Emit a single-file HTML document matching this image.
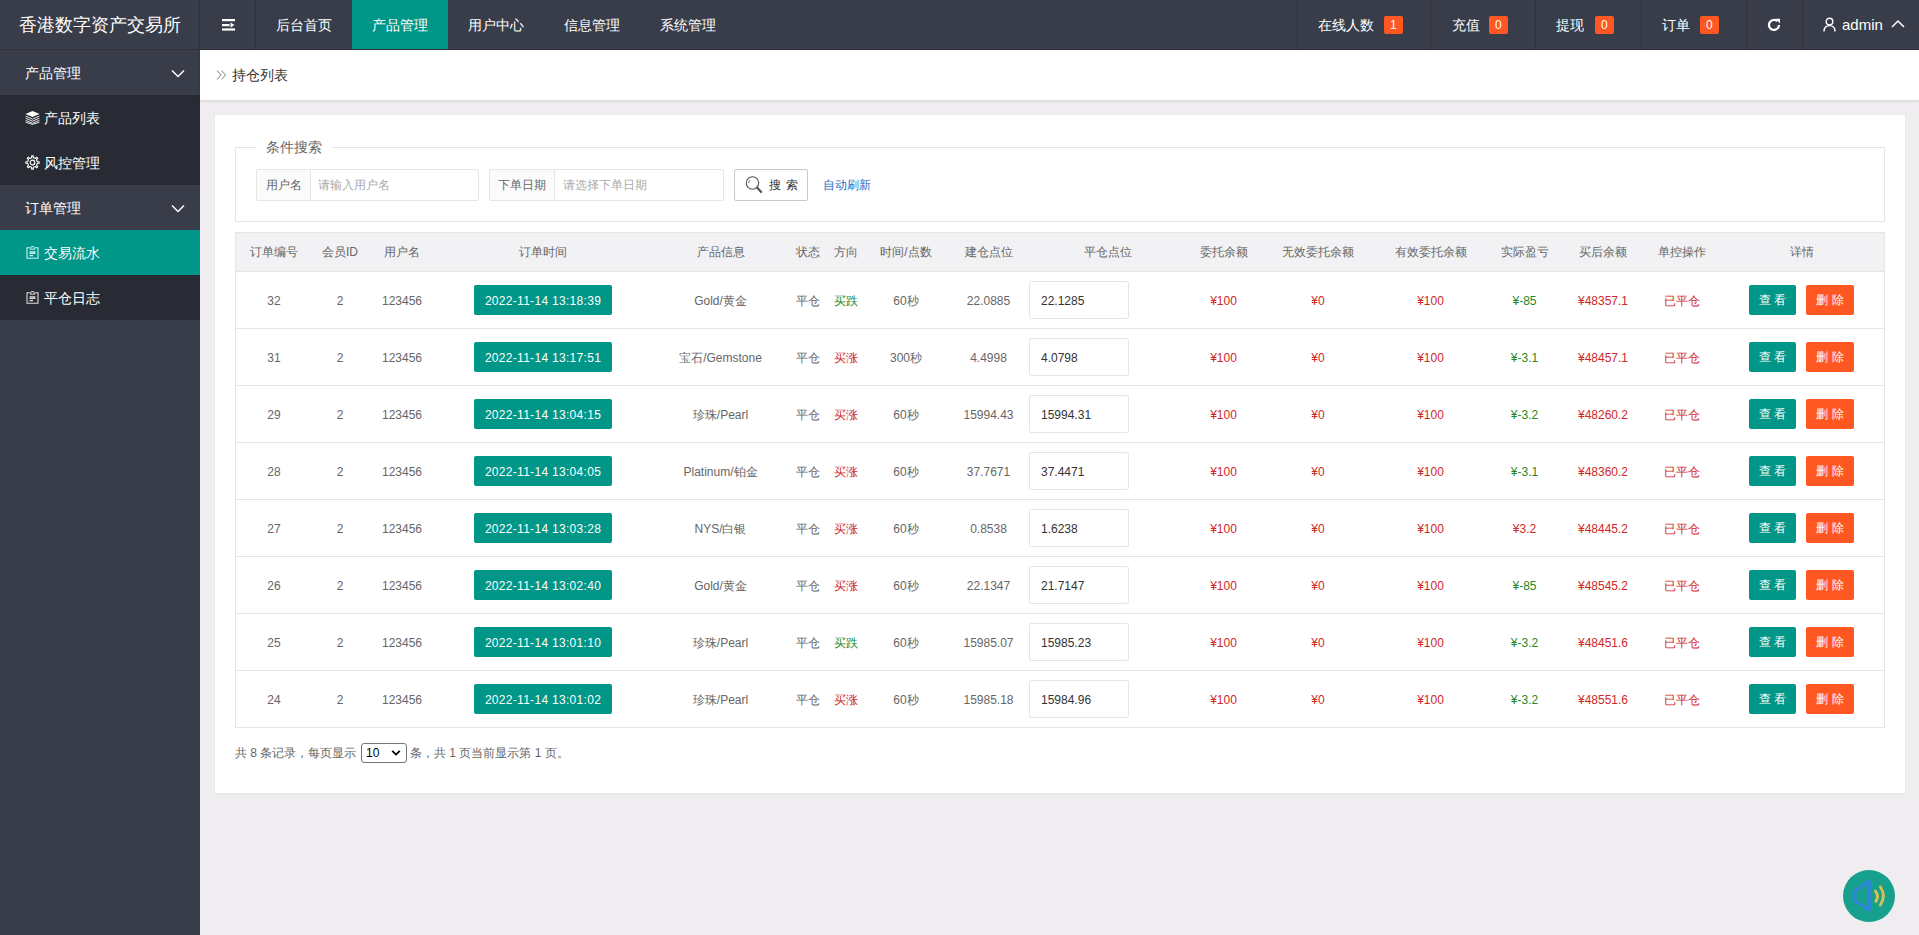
<!DOCTYPE html><html><head><meta charset="utf-8"><title>持仓列表</title><style>

*{box-sizing:border-box;margin:0;padding:0}
html,body{width:1919px;height:935px;overflow:hidden}
body{background:#EFEDF0;font-family:"Liberation Sans", sans-serif;color:#666;font-size:12px;position:relative}
.abs{position:absolute}
.t{position:absolute;white-space:nowrap;line-height:1}
.c{position:absolute;white-space:nowrap;text-align:center;line-height:20px;height:20px}
#hdr{left:0;top:0;width:1919px;height:50px;background:#393D49}
#hdr .ln{position:absolute;top:0;width:1px;height:49px;background:#2f323c}
#hdr .bl{position:absolute;left:0;top:49px;width:1919px;height:1px;background:#30333c}
.nav{position:absolute;top:0;height:50px;line-height:50px;color:#fff;font-size:14px;text-align:center}
.badge{display:inline-block;position:absolute;top:16px;height:18px;line-height:18px;padding:0 6px;background:#FF5722;color:#fff;font-size:12px;border-radius:2px}
#side{left:0;top:50px;width:200px;height:885px;background:#393D49}
.mi{position:absolute;left:0;width:200px;height:45px;line-height:45px;color:#fff;font-size:14px}
#crumb{left:200px;top:50px;width:1719px;height:50px;background:#fff;box-shadow:0 1px 3px rgba(0,0,0,.12)}
#card{left:215px;top:115px;width:1690px;height:678px;background:#fff;box-shadow:0 1px 2px rgba(0,0,0,.05)}
.ig{position:absolute;height:32px;border:1px solid #e6e6e6;border-radius:2px;background:#fff}
.ig .lb{position:absolute;left:0;top:0;height:30px;line-height:30px;background:#FBFBFB;border-right:1px solid #e6e6e6;color:#666;text-align:center;font-size:12px}
.ig .ph{position:absolute;top:0;height:30px;line-height:30px;color:#aaa;font-size:12px}
.btn{position:absolute;height:30px;line-height:30px;color:#fff;font-size:12px;text-align:center;border-radius:2px}
.inp{position:absolute;width:100px;height:38px;border:1px solid #e6e6e6;border-radius:2px;background:#fff;color:#333;font-size:12px;line-height:38px;padding-left:11px}

</style></head><body>
<div id="hdr" class="abs">
<div class="t" style="left:19px;top:16px;font-size:18px;color:#fff">香港数字资产交易所</div>
<div class="ln" style="left:199px"></div>
<div class="ln" style="left:255px"></div>
<div class="ln" style="left:1297px"></div>
<div class="ln" style="left:1430px"></div>
<div class="ln" style="left:1535px"></div>
<div class="ln" style="left:1641px"></div>
<div class="ln" style="left:1746px"></div>
<div class="ln" style="left:1802px"></div>
<div class="bl"></div>
<svg class="abs" style="left:221px;top:18px" width="15" height="14" viewBox="0 0 15 14"><rect x="1" y="1" width="13" height="2.2" fill="#fff"/><rect x="1" y="6" width="7.5" height="2.2" fill="#fff"/><path d="M9.5 4.6 L13.5 7.1 L9.5 9.6 Z" fill="#fff"/><rect x="1" y="10.4" width="13" height="2.2" fill="#fff"/></svg>
<div class="abs" style="left:352px;top:0;width:96px;height:49px;background:#009688"></div>
<div class="nav" style="left:256px;width:96px">后台首页</div>
<div class="nav" style="left:352px;width:96px">产品管理</div>
<div class="nav" style="left:448px;width:96px">用户中心</div>
<div class="nav" style="left:544px;width:96px">信息管理</div>
<div class="nav" style="left:640px;width:96px">系统管理</div>
<div class="t" style="left:1318px;top:18px;font-size:14px;color:#fff">在线人数</div>
<div class="badge" style="left:1384px">1</div>
<div class="t" style="left:1452px;top:18px;font-size:14px;color:#fff">充值</div>
<div class="badge" style="left:1489px">0</div>
<div class="t" style="left:1556px;top:18px;font-size:14px;color:#fff">提现</div>
<div class="badge" style="left:1595px">0</div>
<div class="t" style="left:1662px;top:18px;font-size:14px;color:#fff">订单</div>
<div class="badge" style="left:1700px">0</div>
<svg class="abs" style="left:1766px;top:17px" width="16" height="16" viewBox="0 0 16 16"><path d="M13 8 A5 5 0 1 1 11.3 4.2" fill="none" stroke="#fff" stroke-width="2.2"/><path d="M9.2 1.8 L14 1.8 L14 6.6 Z" fill="#fff"/></svg>
<svg class="abs" style="left:1823px;top:17px" width="13" height="15" viewBox="0 0 13 15"><circle cx="6.5" cy="4.5" r="3.3" fill="none" stroke="#fff" stroke-width="1.4"/><path d="M1 14.5 C1 10.5 3.5 8.6 6.5 8.6 C9.5 8.6 12 10.5 12 14.5" fill="none" stroke="#fff" stroke-width="1.4"/></svg>
<div class="t" style="left:1842px;top:17px;font-size:15px;color:#fff">admin</div>
<svg class="abs" style="left:1891px;top:19px" width="14" height="9" viewBox="0 0 14 9"><path d="M1 8 L7 2 L13 8" fill="none" stroke="#fff" stroke-width="1.5"/></svg>
</div>
<div id="side" class="abs">
<div class="abs" style="left:0;top:45px;width:200px;height:90px;background:#282B33"></div>
<div class="abs" style="left:0;top:180px;width:200px;height:45px;background:#009688"></div>
<div class="abs" style="left:0;top:225px;width:200px;height:45px;background:#282B33"></div>
<div class="mi" style="top:0"><span class="t" style="left:25px;top:16px">产品管理</span></div>
<svg class="abs" style="left:171px;top:19px" width="14" height="9" viewBox="0 0 14 9"><path d="M1 1.5 L7 7.5 L13 1.5" fill="none" stroke="#fff" stroke-width="1.5"/></svg>
<div class="mi" style="top:45px"><span class="t" style="left:44px;top:16px">产品列表</span></div>
<div class="mi" style="top:90px"><span class="t" style="left:44px;top:16px">风控管理</span></div>
<div class="mi" style="top:135px"><span class="t" style="left:25px;top:16px">订单管理</span></div>
<svg class="abs" style="left:171px;top:154px" width="14" height="9" viewBox="0 0 14 9"><path d="M1 1.5 L7 7.5 L13 1.5" fill="none" stroke="#fff" stroke-width="1.5"/></svg>
<div class="mi" style="top:180px"><span class="t" style="left:44px;top:16px">交易流水</span></div>
<div class="mi" style="top:225px"><span class="t" style="left:44px;top:16px">平仓日志</span></div>
<svg class="abs" style="left:25px;top:61px" width="15" height="14" viewBox="0 0 15 14"><path d="M7.5 0 L14.5 3 L7.5 6 L0.5 3 Z" fill="#fff"/><path d="M0.6 5.1 L7.5 8.1 L14.4 5.1 M0.6 7.2 L7.5 10.2 L14.4 7.2 M0.6 9.3 L7.5 12.3 L14.4 9.3 M0.6 11.2 L7.5 13.4 L14.4 11.2" fill="none" stroke="#fff" stroke-width="0.9"/></svg>
<svg class="abs" style="left:25px;top:105px" width="15" height="15" viewBox="0 0 15 15"><circle cx="7.5" cy="7.5" r="2.3" fill="none" stroke="#fff" stroke-width="1.2"/><path d="M6.64 2.68 L6.71 0.85 L8.29 0.85 L8.36 2.68 L10.30 3.48 L11.65 2.24 L12.76 3.35 L11.52 4.70 L12.32 6.64 L14.15 6.71 L14.15 8.29 L12.32 8.36 L11.52 10.30 L12.76 11.65 L11.65 12.76 L10.30 11.52 L8.36 12.32 L8.29 14.15 L6.71 14.15 L6.64 12.32 L4.70 11.52 L3.35 12.76 L2.24 11.65 L3.48 10.30 L2.68 8.36 L0.85 8.29 L0.85 6.71 L2.68 6.64 L3.48 4.70 L2.24 3.35 L3.35 2.24 L4.70 3.48 Z" fill="none" stroke="#fff" stroke-width="1.1" stroke-linejoin="round"/></svg>
<svg class="abs" style="left:26px;top:196px" width="13" height="13" viewBox="0 0 13 13"><path d="M4 1.8 H1 V12.2 H12 V1.8 H9" fill="none" stroke="#C8F3EA" stroke-width="1.1"/><path d="M4.3 3.2 L5.3 0.6 H7.7 L8.7 3.2 Z" fill="none" stroke="#C8F3EA" stroke-width="1"/><path d="M3.5 5.8 H9.5 M3.5 7.3 H9.5 M3.5 9.6 H7" stroke="#C8F3EA" stroke-width="1.2"/></svg>
<svg class="abs" style="left:26px;top:241px" width="13" height="13" viewBox="0 0 13 13"><path d="M4 1.8 H1 V12.2 H12 V1.8 H9" fill="none" stroke="#ddd" stroke-width="1.1"/><path d="M4.3 3.2 L5.3 0.6 H7.7 L8.7 3.2 Z" fill="none" stroke="#ddd" stroke-width="1"/><path d="M3.5 5.8 H9.5 M3.5 7.3 H9.5 M3.5 9.6 H7" stroke="#ddd" stroke-width="1.2"/></svg>
</div>
<div id="crumb" class="abs">
<svg class="abs" style="left:16px;top:19px" width="11" height="12" viewBox="0 0 11 12"><path d="M1 1.5 L5 6 L1 10.5 M5.5 1.5 L9.5 6 L5.5 10.5" fill="none" stroke="#999" stroke-width="1.1"/></svg>
<div class="t" style="left:32px;top:18px;font-size:14px;color:#333">持仓列表</div>
</div>
<div id="card" class="abs"></div>
<div class="abs" style="left:235px;top:147px;width:1650px;height:75px;border:1px solid #e6e6e6"></div>
<div class="abs" style="left:256px;top:138px;width:76px;height:20px;background:#fff"></div>
<div class="t" style="left:266px;top:140px;font-size:14px;color:#666">条件搜索</div>
<div class="ig" style="left:256px;top:169px;width:223px"><div class="lb" style="width:54px">用户名</div><div class="ph" style="left:61px">请输入用户名</div></div>
<div class="ig" style="left:489px;top:169px;width:235px"><div class="lb" style="width:65px">下单日期</div><div class="ph" style="left:73px">请选择下单日期</div></div>
<div class="abs" style="left:734px;top:169px;width:74px;height:32px;border:1px solid #C9C9C9;border-radius:2px;background:#fff"></div>
<svg class="abs" style="left:745px;top:175px" width="18" height="19" viewBox="0 0 18 19"><circle cx="7.5" cy="8" r="6.2" fill="none" stroke="#555" stroke-width="1.1"/><path d="M3.8 8.2 A3.8 3.8 0 0 1 5.2 5.2" fill="none" stroke="#555" stroke-width="0.9"/><path d="M12 12.6 L16.2 17" stroke="#555" stroke-width="2.2" stroke-linecap="round"/></svg>
<div class="t" style="left:769px;top:179px;font-size:12px;color:#333">搜<span style="margin-left:5px">索</span></div>
<div class="t" style="left:823px;top:179px;font-size:12px;color:#1f70c8">自动刷新</div>
<div class="abs" style="left:235px;top:232px;width:1650px;height:40px;background:#F2F2F4;border:1px solid #e6e6e6;border-bottom:1px solid #e6e6e6"></div>
<div class="abs" style="left:235px;top:232px;width:1650px;height:496px;border:1px solid #e6e6e6"></div>
<div class="c" style="left:214px;top:242px;width:120px;color:#666">订单编号</div>
<div class="c" style="left:280px;top:242px;width:120px;color:#666">会员ID</div>
<div class="c" style="left:342px;top:242px;width:120px;color:#666">用户名</div>
<div class="c" style="left:483px;top:242px;width:120px;color:#666">订单时间</div>
<div class="c" style="left:660.5px;top:242px;width:120px;color:#666">产品信息</div>
<div class="c" style="left:748px;top:242px;width:120px;color:#666">状态</div>
<div class="c" style="left:785.5px;top:242px;width:120px;color:#666">方向</div>
<div class="c" style="left:846px;top:242px;width:120px;color:#666">时间/点数</div>
<div class="c" style="left:928.5px;top:242px;width:120px;color:#666">建仓点位</div>
<div class="c" style="left:1048px;top:242px;width:120px;color:#666">平仓点位</div>
<div class="c" style="left:1163.5px;top:242px;width:120px;color:#666">委托余额</div>
<div class="c" style="left:1258px;top:242px;width:120px;color:#666">无效委托余额</div>
<div class="c" style="left:1370.5px;top:242px;width:120px;color:#666">有效委托余额</div>
<div class="c" style="left:1464.5px;top:242px;width:120px;color:#666">实际盈亏</div>
<div class="c" style="left:1543px;top:242px;width:120px;color:#666">买后余额</div>
<div class="c" style="left:1621.5px;top:242px;width:120px;color:#666">单控操作</div>
<div class="c" style="left:1741.5px;top:242px;width:120px;color:#666">详情</div>
<div class="c" style="left:204px;top:291px;width:140px;color:#666">32</div>
<div class="c" style="left:270px;top:291px;width:140px;color:#666">2</div>
<div class="c" style="left:332px;top:291px;width:140px;color:#666">123456</div>
<div class="btn" style="left:474px;top:285px;width:138px;line-height:32px;background:#009688;letter-spacing:0.3px">2022-11-14 13:18:39</div>
<div class="c" style="left:650.5px;top:291px;width:140px;color:#666">Gold/黄金</div>
<div class="c" style="left:738px;top:291px;width:140px;color:#666">平仓</div>
<div class="c" style="left:775.5px;top:291px;width:140px;color:#1F881F">买跌</div>
<div class="c" style="left:836px;top:291px;width:140px;color:#666">60秒</div>
<div class="c" style="left:918.5px;top:291px;width:140px;color:#666">22.0885</div>
<div class="inp" style="left:1029px;top:281px">22.1285</div>
<div class="c" style="left:1153.5px;top:291px;width:140px;color:#D02828">¥100</div>
<div class="c" style="left:1248px;top:291px;width:140px;color:#D02828">¥0</div>
<div class="c" style="left:1360.5px;top:291px;width:140px;color:#D02828">¥100</div>
<div class="c" style="left:1454.5px;top:291px;width:140px;color:#1F881F">¥-85</div>
<div class="c" style="left:1533px;top:291px;width:140px;color:#D02828">¥48357.1</div>
<div class="c" style="left:1611.5px;top:291px;width:140px;color:#D02828">已平仓</div>
<div class="btn" style="left:1749px;top:285px;width:47px;background:#009688">查&nbsp;看</div>
<div class="btn" style="left:1806px;top:285px;width:48px;background:#FF5722">删&nbsp;除</div>
<div class="abs" style="left:235px;top:328px;width:1650px;height:1px;background:#e6e6e6"></div>
<div class="c" style="left:204px;top:348px;width:140px;color:#666">31</div>
<div class="c" style="left:270px;top:348px;width:140px;color:#666">2</div>
<div class="c" style="left:332px;top:348px;width:140px;color:#666">123456</div>
<div class="btn" style="left:474px;top:342px;width:138px;line-height:32px;background:#009688;letter-spacing:0.3px">2022-11-14 13:17:51</div>
<div class="c" style="left:650.5px;top:348px;width:140px;color:#666">宝石/Gemstone</div>
<div class="c" style="left:738px;top:348px;width:140px;color:#666">平仓</div>
<div class="c" style="left:775.5px;top:348px;width:140px;color:#D02828">买涨</div>
<div class="c" style="left:836px;top:348px;width:140px;color:#666">300秒</div>
<div class="c" style="left:918.5px;top:348px;width:140px;color:#666">4.4998</div>
<div class="inp" style="left:1029px;top:338px">4.0798</div>
<div class="c" style="left:1153.5px;top:348px;width:140px;color:#D02828">¥100</div>
<div class="c" style="left:1248px;top:348px;width:140px;color:#D02828">¥0</div>
<div class="c" style="left:1360.5px;top:348px;width:140px;color:#D02828">¥100</div>
<div class="c" style="left:1454.5px;top:348px;width:140px;color:#1F881F">¥-3.1</div>
<div class="c" style="left:1533px;top:348px;width:140px;color:#D02828">¥48457.1</div>
<div class="c" style="left:1611.5px;top:348px;width:140px;color:#D02828">已平仓</div>
<div class="btn" style="left:1749px;top:342px;width:47px;background:#009688">查&nbsp;看</div>
<div class="btn" style="left:1806px;top:342px;width:48px;background:#FF5722">删&nbsp;除</div>
<div class="abs" style="left:235px;top:385px;width:1650px;height:1px;background:#e6e6e6"></div>
<div class="c" style="left:204px;top:405px;width:140px;color:#666">29</div>
<div class="c" style="left:270px;top:405px;width:140px;color:#666">2</div>
<div class="c" style="left:332px;top:405px;width:140px;color:#666">123456</div>
<div class="btn" style="left:474px;top:399px;width:138px;line-height:32px;background:#009688;letter-spacing:0.3px">2022-11-14 13:04:15</div>
<div class="c" style="left:650.5px;top:405px;width:140px;color:#666">珍珠/Pearl</div>
<div class="c" style="left:738px;top:405px;width:140px;color:#666">平仓</div>
<div class="c" style="left:775.5px;top:405px;width:140px;color:#D02828">买涨</div>
<div class="c" style="left:836px;top:405px;width:140px;color:#666">60秒</div>
<div class="c" style="left:918.5px;top:405px;width:140px;color:#666">15994.43</div>
<div class="inp" style="left:1029px;top:395px">15994.31</div>
<div class="c" style="left:1153.5px;top:405px;width:140px;color:#D02828">¥100</div>
<div class="c" style="left:1248px;top:405px;width:140px;color:#D02828">¥0</div>
<div class="c" style="left:1360.5px;top:405px;width:140px;color:#D02828">¥100</div>
<div class="c" style="left:1454.5px;top:405px;width:140px;color:#1F881F">¥-3.2</div>
<div class="c" style="left:1533px;top:405px;width:140px;color:#D02828">¥48260.2</div>
<div class="c" style="left:1611.5px;top:405px;width:140px;color:#D02828">已平仓</div>
<div class="btn" style="left:1749px;top:399px;width:47px;background:#009688">查&nbsp;看</div>
<div class="btn" style="left:1806px;top:399px;width:48px;background:#FF5722">删&nbsp;除</div>
<div class="abs" style="left:235px;top:442px;width:1650px;height:1px;background:#e6e6e6"></div>
<div class="c" style="left:204px;top:462px;width:140px;color:#666">28</div>
<div class="c" style="left:270px;top:462px;width:140px;color:#666">2</div>
<div class="c" style="left:332px;top:462px;width:140px;color:#666">123456</div>
<div class="btn" style="left:474px;top:456px;width:138px;line-height:32px;background:#009688;letter-spacing:0.3px">2022-11-14 13:04:05</div>
<div class="c" style="left:650.5px;top:462px;width:140px;color:#666">Platinum/铂金</div>
<div class="c" style="left:738px;top:462px;width:140px;color:#666">平仓</div>
<div class="c" style="left:775.5px;top:462px;width:140px;color:#D02828">买涨</div>
<div class="c" style="left:836px;top:462px;width:140px;color:#666">60秒</div>
<div class="c" style="left:918.5px;top:462px;width:140px;color:#666">37.7671</div>
<div class="inp" style="left:1029px;top:452px">37.4471</div>
<div class="c" style="left:1153.5px;top:462px;width:140px;color:#D02828">¥100</div>
<div class="c" style="left:1248px;top:462px;width:140px;color:#D02828">¥0</div>
<div class="c" style="left:1360.5px;top:462px;width:140px;color:#D02828">¥100</div>
<div class="c" style="left:1454.5px;top:462px;width:140px;color:#1F881F">¥-3.1</div>
<div class="c" style="left:1533px;top:462px;width:140px;color:#D02828">¥48360.2</div>
<div class="c" style="left:1611.5px;top:462px;width:140px;color:#D02828">已平仓</div>
<div class="btn" style="left:1749px;top:456px;width:47px;background:#009688">查&nbsp;看</div>
<div class="btn" style="left:1806px;top:456px;width:48px;background:#FF5722">删&nbsp;除</div>
<div class="abs" style="left:235px;top:499px;width:1650px;height:1px;background:#e6e6e6"></div>
<div class="c" style="left:204px;top:519px;width:140px;color:#666">27</div>
<div class="c" style="left:270px;top:519px;width:140px;color:#666">2</div>
<div class="c" style="left:332px;top:519px;width:140px;color:#666">123456</div>
<div class="btn" style="left:474px;top:513px;width:138px;line-height:32px;background:#009688;letter-spacing:0.3px">2022-11-14 13:03:28</div>
<div class="c" style="left:650.5px;top:519px;width:140px;color:#666">NYS/白银</div>
<div class="c" style="left:738px;top:519px;width:140px;color:#666">平仓</div>
<div class="c" style="left:775.5px;top:519px;width:140px;color:#D02828">买涨</div>
<div class="c" style="left:836px;top:519px;width:140px;color:#666">60秒</div>
<div class="c" style="left:918.5px;top:519px;width:140px;color:#666">0.8538</div>
<div class="inp" style="left:1029px;top:509px">1.6238</div>
<div class="c" style="left:1153.5px;top:519px;width:140px;color:#D02828">¥100</div>
<div class="c" style="left:1248px;top:519px;width:140px;color:#D02828">¥0</div>
<div class="c" style="left:1360.5px;top:519px;width:140px;color:#D02828">¥100</div>
<div class="c" style="left:1454.5px;top:519px;width:140px;color:#D02828">¥3.2</div>
<div class="c" style="left:1533px;top:519px;width:140px;color:#D02828">¥48445.2</div>
<div class="c" style="left:1611.5px;top:519px;width:140px;color:#D02828">已平仓</div>
<div class="btn" style="left:1749px;top:513px;width:47px;background:#009688">查&nbsp;看</div>
<div class="btn" style="left:1806px;top:513px;width:48px;background:#FF5722">删&nbsp;除</div>
<div class="abs" style="left:235px;top:556px;width:1650px;height:1px;background:#e6e6e6"></div>
<div class="c" style="left:204px;top:576px;width:140px;color:#666">26</div>
<div class="c" style="left:270px;top:576px;width:140px;color:#666">2</div>
<div class="c" style="left:332px;top:576px;width:140px;color:#666">123456</div>
<div class="btn" style="left:474px;top:570px;width:138px;line-height:32px;background:#009688;letter-spacing:0.3px">2022-11-14 13:02:40</div>
<div class="c" style="left:650.5px;top:576px;width:140px;color:#666">Gold/黄金</div>
<div class="c" style="left:738px;top:576px;width:140px;color:#666">平仓</div>
<div class="c" style="left:775.5px;top:576px;width:140px;color:#D02828">买涨</div>
<div class="c" style="left:836px;top:576px;width:140px;color:#666">60秒</div>
<div class="c" style="left:918.5px;top:576px;width:140px;color:#666">22.1347</div>
<div class="inp" style="left:1029px;top:566px">21.7147</div>
<div class="c" style="left:1153.5px;top:576px;width:140px;color:#D02828">¥100</div>
<div class="c" style="left:1248px;top:576px;width:140px;color:#D02828">¥0</div>
<div class="c" style="left:1360.5px;top:576px;width:140px;color:#D02828">¥100</div>
<div class="c" style="left:1454.5px;top:576px;width:140px;color:#1F881F">¥-85</div>
<div class="c" style="left:1533px;top:576px;width:140px;color:#D02828">¥48545.2</div>
<div class="c" style="left:1611.5px;top:576px;width:140px;color:#D02828">已平仓</div>
<div class="btn" style="left:1749px;top:570px;width:47px;background:#009688">查&nbsp;看</div>
<div class="btn" style="left:1806px;top:570px;width:48px;background:#FF5722">删&nbsp;除</div>
<div class="abs" style="left:235px;top:613px;width:1650px;height:1px;background:#e6e6e6"></div>
<div class="c" style="left:204px;top:633px;width:140px;color:#666">25</div>
<div class="c" style="left:270px;top:633px;width:140px;color:#666">2</div>
<div class="c" style="left:332px;top:633px;width:140px;color:#666">123456</div>
<div class="btn" style="left:474px;top:627px;width:138px;line-height:32px;background:#009688;letter-spacing:0.3px">2022-11-14 13:01:10</div>
<div class="c" style="left:650.5px;top:633px;width:140px;color:#666">珍珠/Pearl</div>
<div class="c" style="left:738px;top:633px;width:140px;color:#666">平仓</div>
<div class="c" style="left:775.5px;top:633px;width:140px;color:#1F881F">买跌</div>
<div class="c" style="left:836px;top:633px;width:140px;color:#666">60秒</div>
<div class="c" style="left:918.5px;top:633px;width:140px;color:#666">15985.07</div>
<div class="inp" style="left:1029px;top:623px">15985.23</div>
<div class="c" style="left:1153.5px;top:633px;width:140px;color:#D02828">¥100</div>
<div class="c" style="left:1248px;top:633px;width:140px;color:#D02828">¥0</div>
<div class="c" style="left:1360.5px;top:633px;width:140px;color:#D02828">¥100</div>
<div class="c" style="left:1454.5px;top:633px;width:140px;color:#1F881F">¥-3.2</div>
<div class="c" style="left:1533px;top:633px;width:140px;color:#D02828">¥48451.6</div>
<div class="c" style="left:1611.5px;top:633px;width:140px;color:#D02828">已平仓</div>
<div class="btn" style="left:1749px;top:627px;width:47px;background:#009688">查&nbsp;看</div>
<div class="btn" style="left:1806px;top:627px;width:48px;background:#FF5722">删&nbsp;除</div>
<div class="abs" style="left:235px;top:670px;width:1650px;height:1px;background:#e6e6e6"></div>
<div class="c" style="left:204px;top:690px;width:140px;color:#666">24</div>
<div class="c" style="left:270px;top:690px;width:140px;color:#666">2</div>
<div class="c" style="left:332px;top:690px;width:140px;color:#666">123456</div>
<div class="btn" style="left:474px;top:684px;width:138px;line-height:32px;background:#009688;letter-spacing:0.3px">2022-11-14 13:01:02</div>
<div class="c" style="left:650.5px;top:690px;width:140px;color:#666">珍珠/Pearl</div>
<div class="c" style="left:738px;top:690px;width:140px;color:#666">平仓</div>
<div class="c" style="left:775.5px;top:690px;width:140px;color:#D02828">买涨</div>
<div class="c" style="left:836px;top:690px;width:140px;color:#666">60秒</div>
<div class="c" style="left:918.5px;top:690px;width:140px;color:#666">15985.18</div>
<div class="inp" style="left:1029px;top:680px">15984.96</div>
<div class="c" style="left:1153.5px;top:690px;width:140px;color:#D02828">¥100</div>
<div class="c" style="left:1248px;top:690px;width:140px;color:#D02828">¥0</div>
<div class="c" style="left:1360.5px;top:690px;width:140px;color:#D02828">¥100</div>
<div class="c" style="left:1454.5px;top:690px;width:140px;color:#1F881F">¥-3.2</div>
<div class="c" style="left:1533px;top:690px;width:140px;color:#D02828">¥48551.6</div>
<div class="c" style="left:1611.5px;top:690px;width:140px;color:#D02828">已平仓</div>
<div class="btn" style="left:1749px;top:684px;width:47px;background:#009688">查&nbsp;看</div>
<div class="btn" style="left:1806px;top:684px;width:48px;background:#FF5722">删&nbsp;除</div>
<div class="t" style="left:235px;top:747px;font-size:12px;color:#666">共 8 条记录，每页显示</div>
<div class="abs" style="left:361px;top:743px;width:46px;height:20px;border:1px solid #767676;border-radius:3px;background:#fff"></div>
<div class="t" style="left:366px;top:747px;font-size:12px;color:#000">10</div>
<svg class="abs" style="left:391px;top:749px" width="10" height="8" viewBox="0 0 10 8"><path d="M1.2 1.8 L5 5.6 L8.8 1.8" fill="none" stroke="#000" stroke-width="1.8"/></svg>
<div class="t" style="left:410px;top:747px;font-size:12px;color:#666">条，共 1 页当前显示第 1 页。</div>
<div class="abs" style="left:1843px;top:870px;width:52px;height:52px;border-radius:50%;background:#17A08E"></div>
<svg class="abs" style="left:1840px;top:866px" width="58" height="58" viewBox="0 0 58 58"><path d="M29.3 15 L29.3 44.5 L19 37 Q15 36.5 15 33.5 L15 26 Q15 23 19 22.5 Z" fill="none" stroke="#3182E2" stroke-width="2.7" stroke-linejoin="round"/><path d="M35.3 25 Q39.5 30 35.8 35.4" fill="none" stroke="#DDBF4C" stroke-width="2.8" stroke-linecap="round"/><path d="M40.3 20.8 Q46.5 30 40.3 39" fill="none" stroke="#DDBF4C" stroke-width="2.8" stroke-linecap="round"/></svg>
</body></html>
